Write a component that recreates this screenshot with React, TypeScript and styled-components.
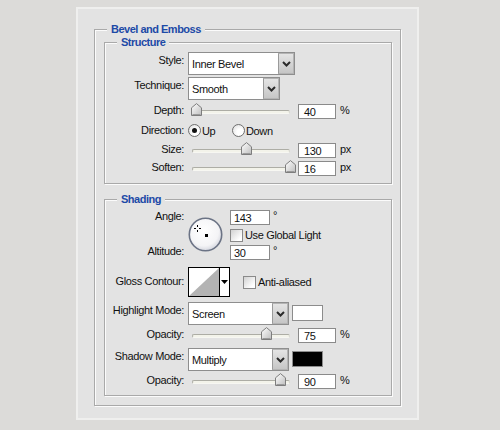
import styled, { createGlobalStyle } from "styled-components";

const GlobalStyle = createGlobalStyle`
  html, body {
    margin: 0;
    padding: 0;
    background: #dcdbd9;
  }
  body {
    font-family: "Liberation Sans", Arial, sans-serif;
    font-size: 11px;
    letter-spacing: -0.35px;
    color: #111;
  }
`;

const TRACK = 98;

type SliderProps = { pct: number };

const SliderControl = ({ pct }: SliderProps) => (
  <SliderBox>
    <Track />
    <Thumb style={{ left: `${Math.round(pct * TRACK - 5)}px` }}>
      <svg width="11" height="13" viewBox="0 0 11 13">
        <defs>
          <linearGradient id="thumbFill" x1="0" y1="0" x2="1" y2="1">
            <stop offset="0" stopColor="#ffffff" />
            <stop offset="1" stopColor="#bdbdbd" />
          </linearGradient>
        </defs>
        <path
          d="M0.5 12.5 V4.8 L5.5 0.6 L10.5 4.8 V12.5 Z"
          fill="url(#thumbFill)"
          stroke="#7d7d7d"
        />
        <path d="M1.5 11.5 H9.5" stroke="#9a9a9a" />
      </svg>
    </Thumb>
  </SliderBox>
);

const Chevron = () => (
  <svg width="9" height="6" viewBox="0 0 9 6">
    <polyline
      points="1,1 4.5,4.5 8,1"
      fill="none"
      stroke="#2a2a2a"
      strokeWidth="2"
    />
  </svg>
);

type DropProps = { value: string; w: number };

const Dropdown = ({ value, w }: DropProps) => (
  <Select $w={w}>
    <SelectText>{value}</SelectText>
    <DropButton>
      <Chevron />
    </DropButton>
  </Select>
);

// angle dial: centre dot plus a small crosshair placed at the light angle
const AngleDial = ({ angle }: { angle: number }) => {
  const rad = (angle * Math.PI) / 180;
  const cx = Math.round(17 + Math.cos(rad) * 10);
  const cy = Math.round(17 - Math.sin(rad) * 10);
  return (
    <svg width="35" height="35" viewBox="0 0 35 35">
      <defs>
        <radialGradient id="dialFill" cx="0.45" cy="0.4" r="0.6">
          <stop offset="0" stopColor="#ffffff" />
          <stop offset="0.75" stopColor="#f4f4f6" />
          <stop offset="1" stopColor="#d6d8e0" />
        </radialGradient>
      </defs>
      <circle cx="17.5" cy="17.5" r="16.2" fill="url(#dialFill)" stroke="#6b7385" strokeWidth="1.6" />
      <rect x="17" y="17" width="3" height="3" fill="#000" />
      <g fill="#000" shapeRendering="crispEdges">
        <rect x={cx - 3} y={cy} width="2" height="1" />
        <rect x={cx + 2} y={cy} width="2" height="1" />
        <rect x={cx} y={cy - 3} width="1" height="2" />
        <rect x={cx} y={cy + 2} width="1" height="2" />
      </g>
    </svg>
  );
};

const ContourPreview = () => (
  <Contour>
    <svg width="30" height="28" viewBox="0 0 30 28">
      <rect width="30" height="28" fill="#fff" />
      <polygon points="0,28 30,0 30,28" fill="#b3b3b3" />
    </svg>
    <ContourArrow>
      <svg width="7" height="4" viewBox="0 0 7 4">
        <polygon points="0,0 7,0 3.5,4" fill="#000" />
      </svg>
    </ContourArrow>
  </Contour>
);

const App = () => {
  return (
    <>
      <GlobalStyle />
      <Panel>
        <Group $pad="0 8px 9px 9px">
          <Legend $left={3}>Bevel and Emboss</Legend>

          <Group $pad="0 0 7px 0" $mt={6}>
            <Legend $left={12}>Structure</Legend>

            <Row $h={23} $mt={3}>
              <Label $lift={6}>Style:</Label>
              <Dropdown value="Inner Bevel" w={107} />
            </Row>
            <Row $h={23} $mt={2}>
              <Label $lift={6}>Technique:</Label>
              <Dropdown value="Smooth" w={92} />
            </Row>
            <Row $h={15} $mt={4}>
              <Label $lift={3}>Depth:</Label>
              <SliderControl pct={0.04} />
              <NumField $w={38}>40</NumField>
              <Unit>%</Unit>
            </Row>

            <Row $h={13} $mt={5}>
              <Label>Direction:</Label>
              <Option>
                <Radio $on />
                Up
              </Option>
              <Option>
                <Radio />
                Down
              </Option>
            </Row>

            <Row $h={15} $mt={6}>
              <Label $lift={3}>Size:</Label>
              <SliderControl pct={0.55} />
              <NumField $w={38}>130</NumField>
              <Unit>px</Unit>
            </Row>
            <Row $h={15} $mt={3}>
              <Label $lift={3}>Soften:</Label>
              <SliderControl pct={1} />
              <NumField $w={38}>16</NumField>
              <Unit>px</Unit>
            </Row>
          </Group>

          <Group $pad="0 0 6px 0" $mt={15}>
            <Legend $left={12}>Shading</Legend>

            <AngleGrid>
              <GridLabel $lift={3}>Angle:</GridLabel>
              <DialCell>
                <AngleDial angle={143} />
              </DialCell>
              <Inline>
                <NumField $w={40} $pl={3}>143</NumField>
                <Degree>°</Degree>
              </Inline>
              <Inline>
                <CheckBox />
                <CheckText>Use Global Light</CheckText>
              </Inline>
              <GridLabel $lift={3} $row={3}>Altitude:</GridLabel>
              <Inline $row={3}>
                <NumField $w={40} $pl={3}>30</NumField>
                <Degree>°</Degree>
              </Inline>
            </AngleGrid>

            <Row $h={30} $mt={7}>
              <Label $lift={2}>Gloss Contour:</Label>
              <ContourPreview />
              <Inline $ml={13}>
                <CheckBox />
                <CheckText>Anti-aliased</CheckText>
              </Inline>
            </Row>

            <Row $h={23} $mt={5}>
              <Label $lift={6}>Highlight Mode:</Label>
              <Dropdown value="Screen" w={101} />
              <Swatch $color="#ffffff" />
            </Row>
            <Row $h={15} $mt={3}>
              <Label $lift={3}>Opacity:</Label>
              <SliderControl pct={0.75} />
              <NumField $w={38}>75</NumField>
              <Unit>%</Unit>
            </Row>
            <Row $h={23} $mt={5}>
              <Label $lift={6}>Shadow Mode:</Label>
              <Dropdown value="Multiply" w={101} />
              <Swatch $color="#000000" />
            </Row>
            <Row $h={15} $mt={3}>
              <Label $lift={3}>Opacity:</Label>
              <SliderControl pct={0.9} />
              <NumField $w={38}>90</NumField>
              <Unit>%</Unit>
            </Row>
          </Group>
        </Group>
      </Panel>
    </>
  );
};
export default App;

const Panel = styled.div`
  box-sizing: border-box;
  width: 343px;
  height: 413px;
  margin: 7px 0 0 76px;
  padding: 20px 16px 0 16px;
  background: #e3e3e3;
  border: 2px solid #efefee;
`;

const Group = styled.div<{ $pad: string; $mt?: number }>`
  margin-top: ${(p) => p.$mt ?? 0}px;
  padding: ${(p) => p.$pad};
  border: 1px solid #a9a9a9;
  box-shadow: inset 1px 1px 0 #fbfbfb, 1px 1px 0 #fbfbfb;
`;

const Legend = styled.div<{ $left: number }>`
  width: fit-content;
  height: 14px;
  margin: -8px 0 0 ${(p) => p.$left}px;
  padding: 0 4px;
  line-height: 14px;
  background: #e3e3e3;
  color: #1d4aa7;
  font-weight: bold;
  letter-spacing: -0.5px;
`;

const Row = styled.div<{ $h: number; $mt: number }>`
  display: flex;
  align-items: center;
  height: ${(p) => p.$h}px;
  margin-top: ${(p) => p.$mt}px;
`;

const Label = styled.div<{ $lift?: number }>`
  box-sizing: border-box;
  flex: none;
  width: 83px;
  padding: 0 4px ${(p) => p.$lift ?? 0}px 0;
  text-align: right;
  line-height: 13px;
  white-space: nowrap;
`;

const Select = styled.div<{ $w: number }>`
  box-sizing: border-box;
  width: ${(p) => p.$w}px;
  height: 23px;
  display: flex;
  align-items: center;
  padding-left: 3px;
  background: #fff;
  border: 1px solid #8e8e8e;
`;

const SelectText = styled.span`
  flex: 1;
  padding-top: 1px;
`;

const DropButton = styled.span`
  box-sizing: border-box;
  width: 16px;
  align-self: stretch;
  display: flex;
  align-items: center;
  justify-content: center;
  background: linear-gradient(#e4e4e4, #c6c6c6);
  border: 1px solid #b4b4b4;
  border-left-color: #9a9a9a;
`;

const SliderBox = styled.div`
  position: relative;
  flex: none;
  width: ${TRACK}px;
  height: 15px;
  margin-left: 4px;
`;

const Track = styled.div`
  box-sizing: border-box;
  height: 4px;
  margin-top: 6px;
  border-radius: 2px;
  background: #f3f3ea;
  border: 1px solid #adada5;
  border-bottom-color: #f7f7f2;
  border-right-color: #d8d8d0;
`;

const Thumb = styled.div`
  position: absolute;
  top: -1px;
  width: 11px;
  height: 13px;
  line-height: 0;
`;

const NumField = styled.div<{ $w: number; $pl?: number }>`
  box-sizing: border-box;
  flex: none;
  width: ${(p) => p.$w}px;
  height: 15px;
  margin-left: ${(p) => (p.$pl ? 0 : 8)}px;
  padding-left: ${(p) => p.$pl ?? 5}px;
  line-height: 14px;
  background: #fff;
  border: 1px solid #8a8a8a;
`;

const Unit = styled.span`
  margin-left: 4px;
  align-self: flex-start;
  line-height: 12px;
`;

const Option = styled.label`
  display: flex;
  align-items: center;
  gap: 1px;
  min-width: 44px;
`;

const Radio = styled.span<{ $on?: boolean }>`
  box-sizing: border-box;
  width: 13px;
  height: 13px;
  display: flex;
  align-items: center;
  justify-content: center;
  border-radius: 50%;
  border: 1px solid #6f6f6f;
  background: radial-gradient(circle at 65% 65%, #ffffff 30%, #dadada);

  &::after {
    content: "";
    display: ${(p) => (p.$on ? "block" : "none")};
    width: 5px;
    height: 5px;
    border-radius: 50%;
    background: #111;
  }
`;

const AngleGrid = styled.div`
  display: grid;
  grid-template-columns: 83px 42px 1fr;
  grid-template-rows: 15px 20px 15px;
  margin-top: 4px;
`;

const GridLabel = styled(Label)<{ $row?: number }>`
  grid-column: 1;
  grid-row: ${(p) => p.$row ?? 1};
  align-self: center;
`;

const DialCell = styled.div`
  grid-column: 2;
  grid-row: 1 / span 3;
  margin: 7px 0 0 0;
  line-height: 0;
`;

const Inline = styled.div<{ $row?: number; $ml?: number }>`
  display: flex;
  align-items: center;
  grid-column: 3;
  grid-row: ${(p) => p.$row ?? "auto"};
  margin-left: ${(p) => p.$ml ?? 0}px;
`;

const Degree = styled.span`
  align-self: flex-start;
  margin-left: 3px;
  line-height: 10px;
`;

const CheckBox = styled.span`
  box-sizing: border-box;
  flex: none;
  width: 13px;
  height: 13px;
  border: 1px solid #8a8a8a;
  background: linear-gradient(135deg, #d2d2d2, #ffffff 80%);
`;

const CheckText = styled.span`
  margin-left: 2px;
`;

const Contour = styled.div`
  display: flex;
  width: 42px;
  height: 30px;
  box-sizing: border-box;
  border: 1px solid #000;
  line-height: 0;
`;

const ContourArrow = styled.div`
  flex: 1;
  display: flex;
  align-items: center;
  justify-content: center;
  border-left: 1px solid #000;
  background: #fff;
`;

const Swatch = styled.div<{ $color: string }>`
  box-sizing: border-box;
  width: 31px;
  height: 16px;
  margin: 0 0 2px 3px;
  background: ${(p) => p.$color};
  border: 1px solid #8c8c8c;
`;
